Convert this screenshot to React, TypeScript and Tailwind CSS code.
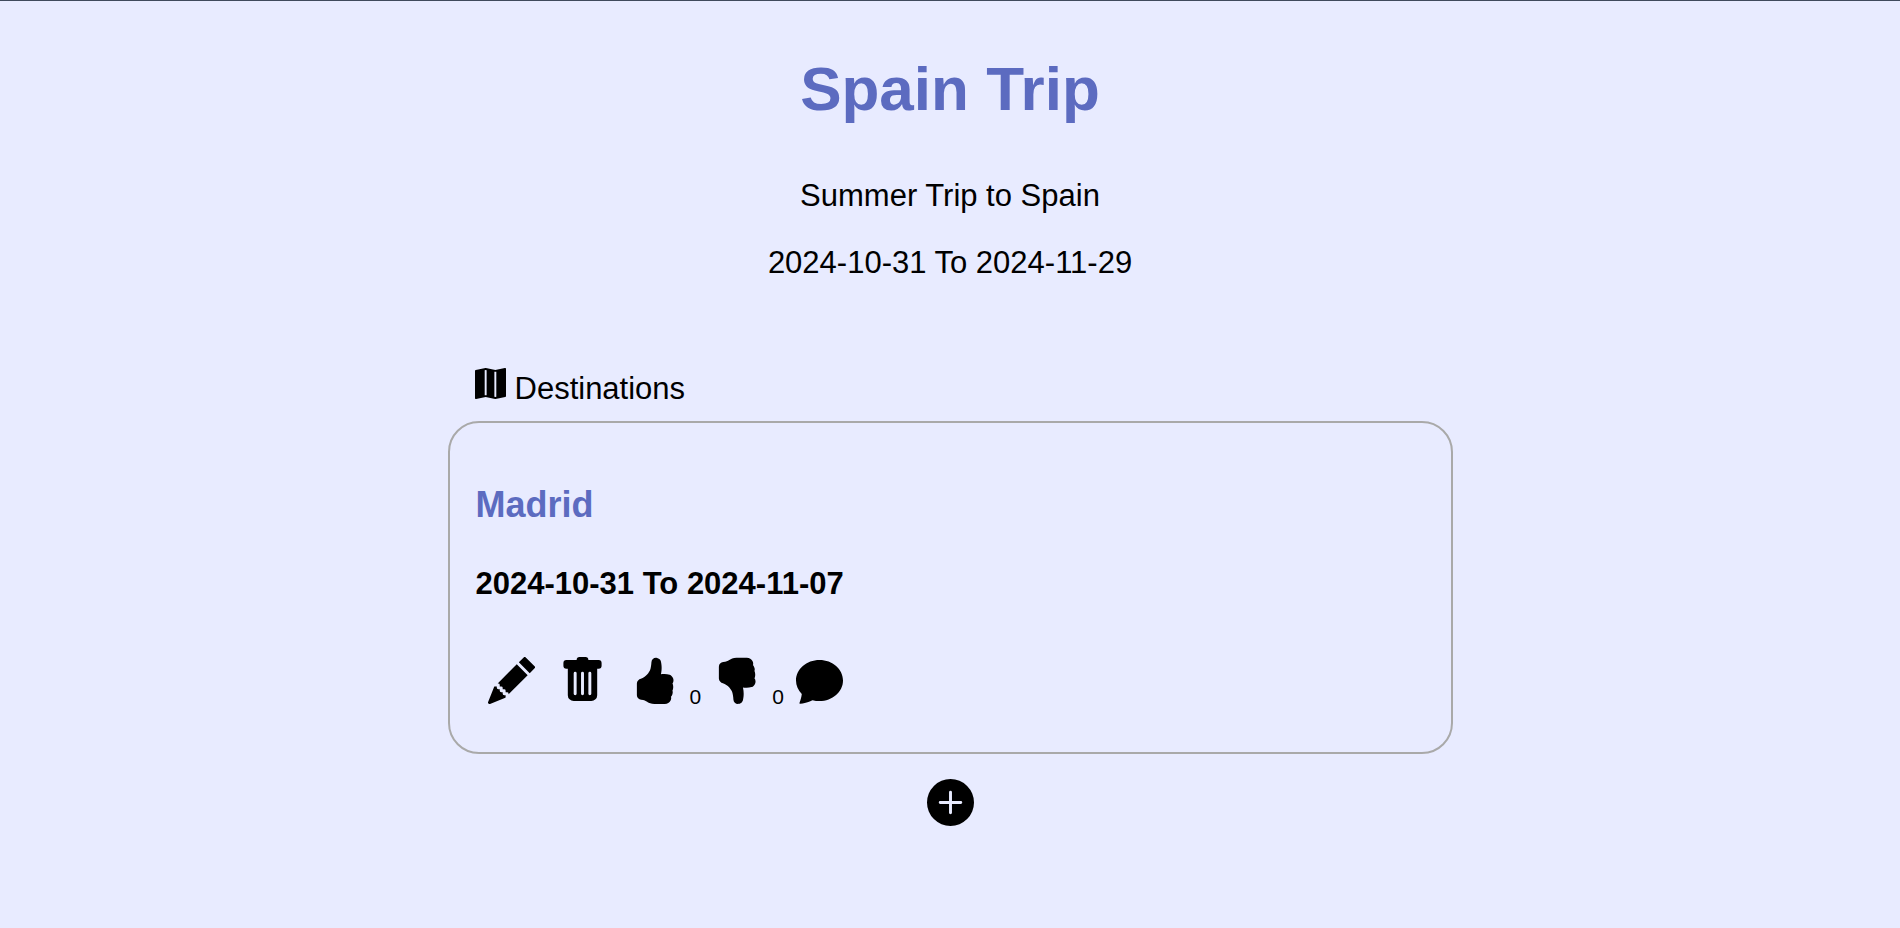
import { useState } from "react";
import {
  BsChatFill,
  BsHandThumbsDownFill,
  BsHandThumbsUpFill,
  BsMapFill,
  BsPencilFill,
  BsPlusCircleFill,
  BsTrashFill,
} from "react-icons/bs";

type Destination = { name: string; start: string; end: string };

const destinations: Destination[] = [
  { name: "Madrid", start: "2024-10-31", end: "2024-11-07" },
];

function DestinationCard({ name, start, end }: Destination) {
  const [likes, setLikes] = useState(0);
  const [dislikes, setDislikes] = useState(0);

  return (
    <article className="rounded-[31px] border-2 border-[#a9a9a9] px-[26px] pt-[61px] pb-[45px]">
      <h3 className="text-[36px] leading-[42px] font-bold text-[#5c6bc0]">{name}</h3>
      <p className="mt-10 text-[31px] leading-9 font-bold">
        {start} To {end}
      </p>
      <div className="mt-[55px] flex items-baseline pl-3 text-[21px] leading-5">
        <button type="button" aria-label="Edit destination" className="mr-6">
          <BsPencilFill className="size-[47px]" />
        </button>
        <button type="button" aria-label="Delete destination" className="mr-[25px]">
          <BsTrashFill className="size-[47px]" />
        </button>
        <button type="button" aria-label="Like" className="mr-3" onClick={() => setLikes(likes + 1)}>
          <BsHandThumbsUpFill className="size-[47px]" />
        </button>
        <span className="mr-3">{likes}</span>
        <button type="button" aria-label="Dislike" className="mr-3" onClick={() => setDislikes(dislikes + 1)}>
          <BsHandThumbsDownFill className="size-[47px]" />
        </button>
        <span className="mr-3">{dislikes}</span>
        <button type="button" aria-label="Comments">
          <BsChatFill className="size-[47px]" />
        </button>
      </div>
    </article>
  );
}

export default function App() {
  return (
    <main className="min-h-screen border-t border-[#3f4a5c] bg-[#e8ebff] px-6 pt-[52px] pb-24 font-['Liberation_Sans',Arial,sans-serif] text-black">
      <header className="text-center text-[31px] leading-9">
        <h1 className="text-[62px] leading-[72px] font-bold text-[#5c6bc0]">Spain Trip</h1>
        <p className="mt-[53px]">Summer Trip to Spain</p>
        <p className="mt-[31px]">2024-10-31 To 2024-11-29</p>
      </header>
      <section className="mx-auto mt-[87px] max-w-[1005px]">
        <h2 className="mb-[14px] flex items-baseline gap-[9px] pl-[27px] text-[31px] leading-9">
          <BsMapFill className="size-[31px]" />
          Destinations
        </h2>
        {destinations.map((d) => (
          <DestinationCard key={d.name} {...d} />
        ))}
        <div className="mt-[25px] flex justify-center">
          <button type="button" aria-label="Add destination">
            <BsPlusCircleFill className="size-[47px]" />
          </button>
        </div>
      </section>
    </main>
  );
}
